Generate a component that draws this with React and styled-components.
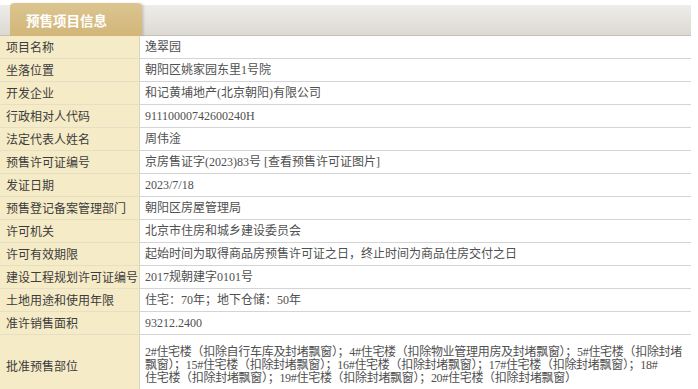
import React from 'react';
import styled, { createGlobalStyle } from 'styled-components';

const GlobalStyle = createGlobalStyle`
  body {
    margin: 0;
    background: #fff;
    font-family: "Liberation Serif", "Noto Sans CJK SC", serif;
  }
`;

const Wrap = styled.div`
  width: 691px;
`;

const Header = styled.div`
  display: flex;
  height: 36px;
  padding-top: 5px;
  box-sizing: border-box;
`;

const HeaderBar = styled.div`
  flex: 1;
  display: flex;
  background: linear-gradient(#eeede9, #dcd9d2);
  border-bottom: 1px solid #c4c1b8;
  padding-left: 10px;
`;

const Tab = styled.div`
  width: 132px;
  margin-top: -2px;
  height: 33px;
  box-sizing: border-box;
  padding-left: 16px;
  display: flex;
  align-items: center;
  border-radius: 4px 4px 0 0;
  background: linear-gradient(#dcc590, #d2b679);
  box-shadow: 2px 0 2px rgba(0, 0, 0, 0.12);
  color: #fff;
  font-family: "Noto Sans CJK SC", sans-serif;
  font-weight: 700;
  font-size: 13.5px;
`;

const Table = styled.div`
  display: grid;
  grid-template-columns: 140px 1fr;
`;

const Label = styled.div`
  background: #f5ebc7;
  border-right: 1px solid #d9d4c0;
  border-bottom: 1px solid #e6dfc6;
  box-sizing: border-box;
  height: ${p => (p.$tall ? '62px' : '23px')};
  padding-left: 6px;
  display: flex;
  align-items: center;
  font-size: 12px;
  color: #3c3c3c;
`;

const Value = styled.div`
  border-bottom: 1px solid #d4d4d4;
  box-sizing: border-box;
  min-height: 23px;
  padding: ${p => (p.$tall ? '4px 0 4px 5px' : '0 4px 0 5px')};
  display: flex;
  flex-direction: column;
  justify-content: center;
  overflow: hidden;
  font-size: 12px;
  line-height: 13px;
  letter-spacing: ${p => (p.$tall ? '-0.3px' : '0')};
  color: #505050;
`;

const Line = styled.span`
  display: block;
  white-space: nowrap;
`;

const rows = [
  ['项目名称', '逸翠园'],
  ['坐落位置', '朝阳区姚家园东里1号院'],
  ['开发企业', '和记黄埔地产(北京朝阳)有限公司'],
  ['行政相对人代码', '91110000742600240H'],
  ['法定代表人姓名', '周伟淦'],
  ['预售许可证编号', '京房售证字(2023)83号 [查看预售许可证图片]'],
  ['发证日期', '2023/7/18'],
  ['预售登记备案管理部门', '朝阳区房屋管理局'],
  ['许可机关', '北京市住房和城乡建设委员会'],
  ['许可有效期限', '起始时间为取得商品房预售许可证之日，终止时间为商品住房交付之日'],
  ['建设工程规划许可证编号', '2017规朝建字0101号'],
  ['土地用途和使用年限', '住宅：70年；地下仓储：50年'],
  ['准许销售面积', '93212.2400'],
];

const parts = [
  '2#住宅楼（扣除自行车库及封堵飘窗）；4#住宅楼（扣除物业管理用房及封堵飘窗）；5#住宅楼（扣除封堵',
  '飘窗）；15#住宅楼（扣除封堵飘窗）；16#住宅楼（扣除封堵飘窗）；17#住宅楼（扣除封堵飘窗）；18#',
  '住宅楼（扣除封堵飘窗）；19#住宅楼（扣除封堵飘窗）；20#住宅楼（扣除封堵飘窗）',
];

export default function App() {
  return (
    <Wrap>
      <GlobalStyle />
      <Header>
        <HeaderBar>
          <Tab>预售项目信息</Tab>
        </HeaderBar>
      </Header>
      <Table>
        {rows.map(([k, v]) => (
          <React.Fragment key={k}>
            <Label>{k}</Label>
            <Value>{v}</Value>
          </React.Fragment>
        ))}
        <Label $tall>批准预售部位</Label>
        <Value $tall>
          {parts.map(t => (
            <Line key={t}>{t}</Line>
          ))}
        </Value>
      </Table>
    </Wrap>
  );
}
